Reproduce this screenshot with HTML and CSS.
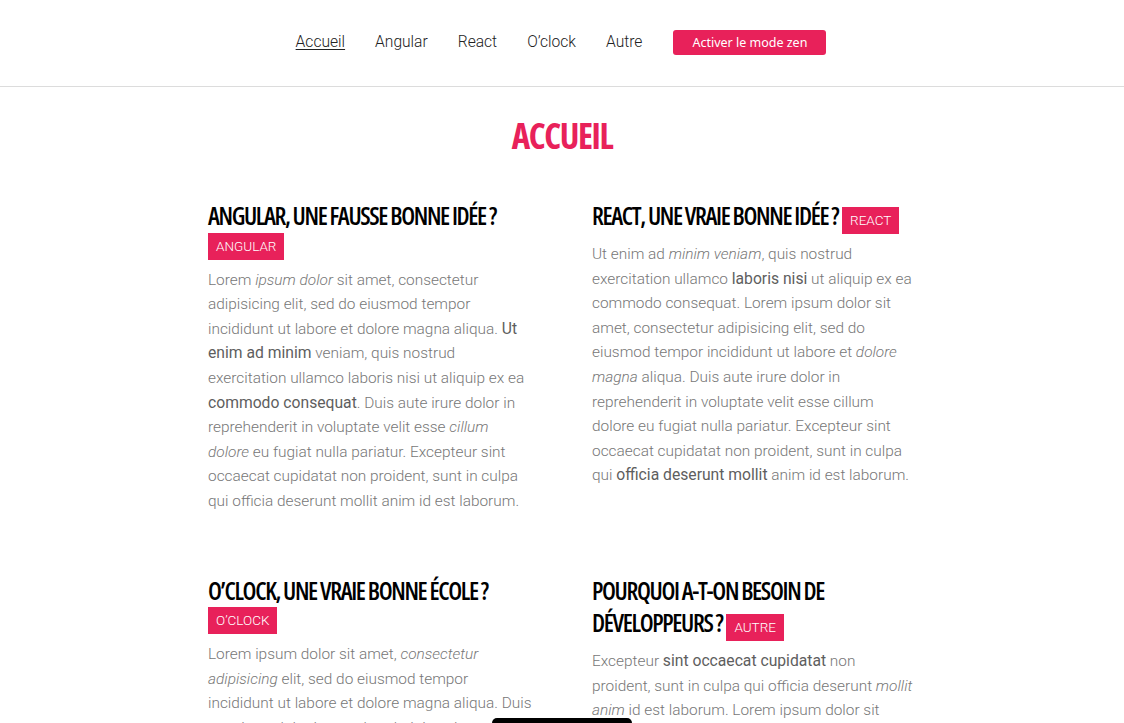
FILE: index.html
```html
<!DOCTYPE html>
<html lang="fr">
<head>
<meta charset="utf-8">
<title>Accueil</title>
<link rel="stylesheet" href="styles.css">
</head>
<body>
<header class="site-header">
  <nav class="nav">
    <a class="nav-link is-active" href="#">Accueil</a>
    <a class="nav-link" href="#">Angular</a>
    <a class="nav-link" href="#">React</a>
    <a class="nav-link" href="#">O’clock</a>
    <a class="nav-link" href="#">Autre</a>
    <button class="zen-btn" type="button">Activer le mode zen</button>
  </nav>
</header>

<main class="main">
  <h1 class="page-title">Accueil</h1>
  <div class="posts">
    <article class="post">
      <div class="post-head"><h2 class="post-title">Angular, une fausse bonne idée ?</h2> <span class="tag">Angular</span></div>
      <p class="post-text">Lorem <em>ipsum dolor</em> sit amet, consectetur adipisicing elit, sed do eiusmod tempor incididunt ut labore et dolore magna aliqua. <strong>Ut enim ad minim</strong> veniam, quis nostrud exercitation ullamco laboris nisi ut aliquip ex ea <strong>commodo consequat</strong>. Duis aute irure dolor in reprehenderit in voluptate velit esse <em>cillum dolore</em> eu fugiat nulla pariatur. Excepteur sint occaecat cupidatat non proident, sunt in culpa qui officia deserunt mollit anim id est laborum.</p>
    </article>
    <article class="post">
      <div class="post-head"><h2 class="post-title">React, une vraie bonne idée ?</h2> <span class="tag">React</span></div>
      <p class="post-text">Ut enim ad <em>minim veniam</em>, quis nostrud exercitation ullamco <strong>laboris nisi</strong> ut aliquip ex ea commodo consequat. Lorem ipsum dolor sit amet, consectetur adipisicing elit, sed do eiusmod tempor incididunt ut labore et <em>dolore magna</em> aliqua. Duis aute irure dolor in reprehenderit in voluptate velit esse cillum dolore eu fugiat nulla pariatur. Excepteur sint occaecat cupidatat non proident, sunt in culpa qui <strong>officia deserunt mollit</strong> anim id est laborum.</p>
    </article>
    <article class="post">
      <div class="post-head"><h2 class="post-title">O’clock, une vraie bonne école ?</h2> <span class="tag">O’clock</span></div>
      <p class="post-text">Lorem ipsum dolor sit amet, <em>consectetur adipisicing</em> elit, sed do eiusmod tempor incididunt ut labore et dolore magna aliqua. Duis aute irure dolor in reprehenderit in voluptate velit esse cillum dolore eu fugiat nulla pariatur. Excepteur sint occaecat cupidatat non proident, sunt in culpa qui officia deserunt mollit anim id est laborum.</p>
    </article>
    <article class="post">
      <div class="post-head"><h2 class="post-title">Pourquoi a-t-on besoin de développeurs ?</h2> <span class="tag">Autre</span></div>
      <p class="post-text">Excepteur <strong>sint occaecat cupidatat</strong> non proident, sunt in culpa qui officia deserunt <em>mollit anim</em> id est laborum. Lorem ipsum dolor sit amet, consectetur adipisicing elit, sed do eiusmod tempor incididunt ut labore et dolore magna aliqua. Ut enim ad minim veniam, quis nostrud exercitation ullamco laboris nisi ut aliquip ex ea commodo consequat.</p>
    </article>
  </div>
</main>

<div class="zen-hint" aria-hidden="true"></div>
</body>
</html>
```
FILE: styles.css
```css
* { box-sizing: border-box; }

html, body {
  margin: 0;
  padding: 0;
  background: #fff;
}

body {
  font-family: Roboto, "Noto Sans", sans-serif;
  font-weight: 300;
  font-size: 15.4px;
  color: #777;
}

/* Header */
.site-header {
  height: 87px;
  border-bottom: 1px solid #dcdcdc;
  display: flex;
  align-items: center;
  justify-content: center;
}

.nav {
  display: flex;
  align-items: center;
  gap: 30px;
  margin-top: -2px;
  margin-left: -2px;
}

.nav-link {
  font-family: Roboto, sans-serif;
  font-weight: 300;
  font-size: 15.6px;
  color: #222;
  text-decoration: none;
}

.nav-link.is-active {
  text-decoration: underline;
  text-underline-offset: 2px;
}

.zen-btn {
  font-family: "Noto Sans", "Open Sans", sans-serif;
  font-size: 12.5px;
  font-weight: 400;
  color: #fff;
  background: #e8215a;
  border: 0;
  border-radius: 3px;
  height: 25px;
  padding: 0 19px;
  margin-left: 1px;
  cursor: pointer;
}

/* Main */
.main {
  width: 708px;
  margin: 0 auto;
  padding-top: 28px;
}

.page-title {
  margin: 0 0 43px;
  text-align: center;
  font-family: "Open Sans", sans-serif;
  font-stretch: 75%;
  font-weight: 700;
  font-size: 35px;
  line-height: 42px;
  letter-spacing: -1.4px;
  text-transform: uppercase;
  color: #e8215a;
}

.posts {
  display: grid;
  grid-template-columns: 1fr 1fr;
  column-gap: 60px;
  row-gap: 61px;
}

.post-head {
  line-height: 24.6px;
}

.post-title {
  display: inline;
  margin: 0;
  font-family: "Open Sans", sans-serif;
  font-stretch: 75%;
  font-weight: 600;
  font-size: 24.5px;
  line-height: 32px;
  letter-spacing: -1.35px;
  text-transform: uppercase;
  color: #000;
}

.tag {
  display: inline-block;
  padding: 6px 8px;
  font-family: Roboto, sans-serif;
  font-weight: 300;
  font-size: 13.5px;
  line-height: 15px;
  text-transform: uppercase;
  color: #fff;
  background: #e8215a;
}

.post-text {
  margin: 8px 0 0;
  line-height: 24.6px;
  color: #777;
}

.post-text strong {
  font-weight: 400;
  font-size: 15.7px;
  color: #5e5e5e;
}

.post-text em {
  font-style: italic;
}

.zen-hint {
  position: fixed;
  left: 50%;
  bottom: 0;
  width: 140px;
  height: 5px;
  margin-left: -70px;
  background: #000;
  border-radius: 8px 8px 0 0;
}
```
